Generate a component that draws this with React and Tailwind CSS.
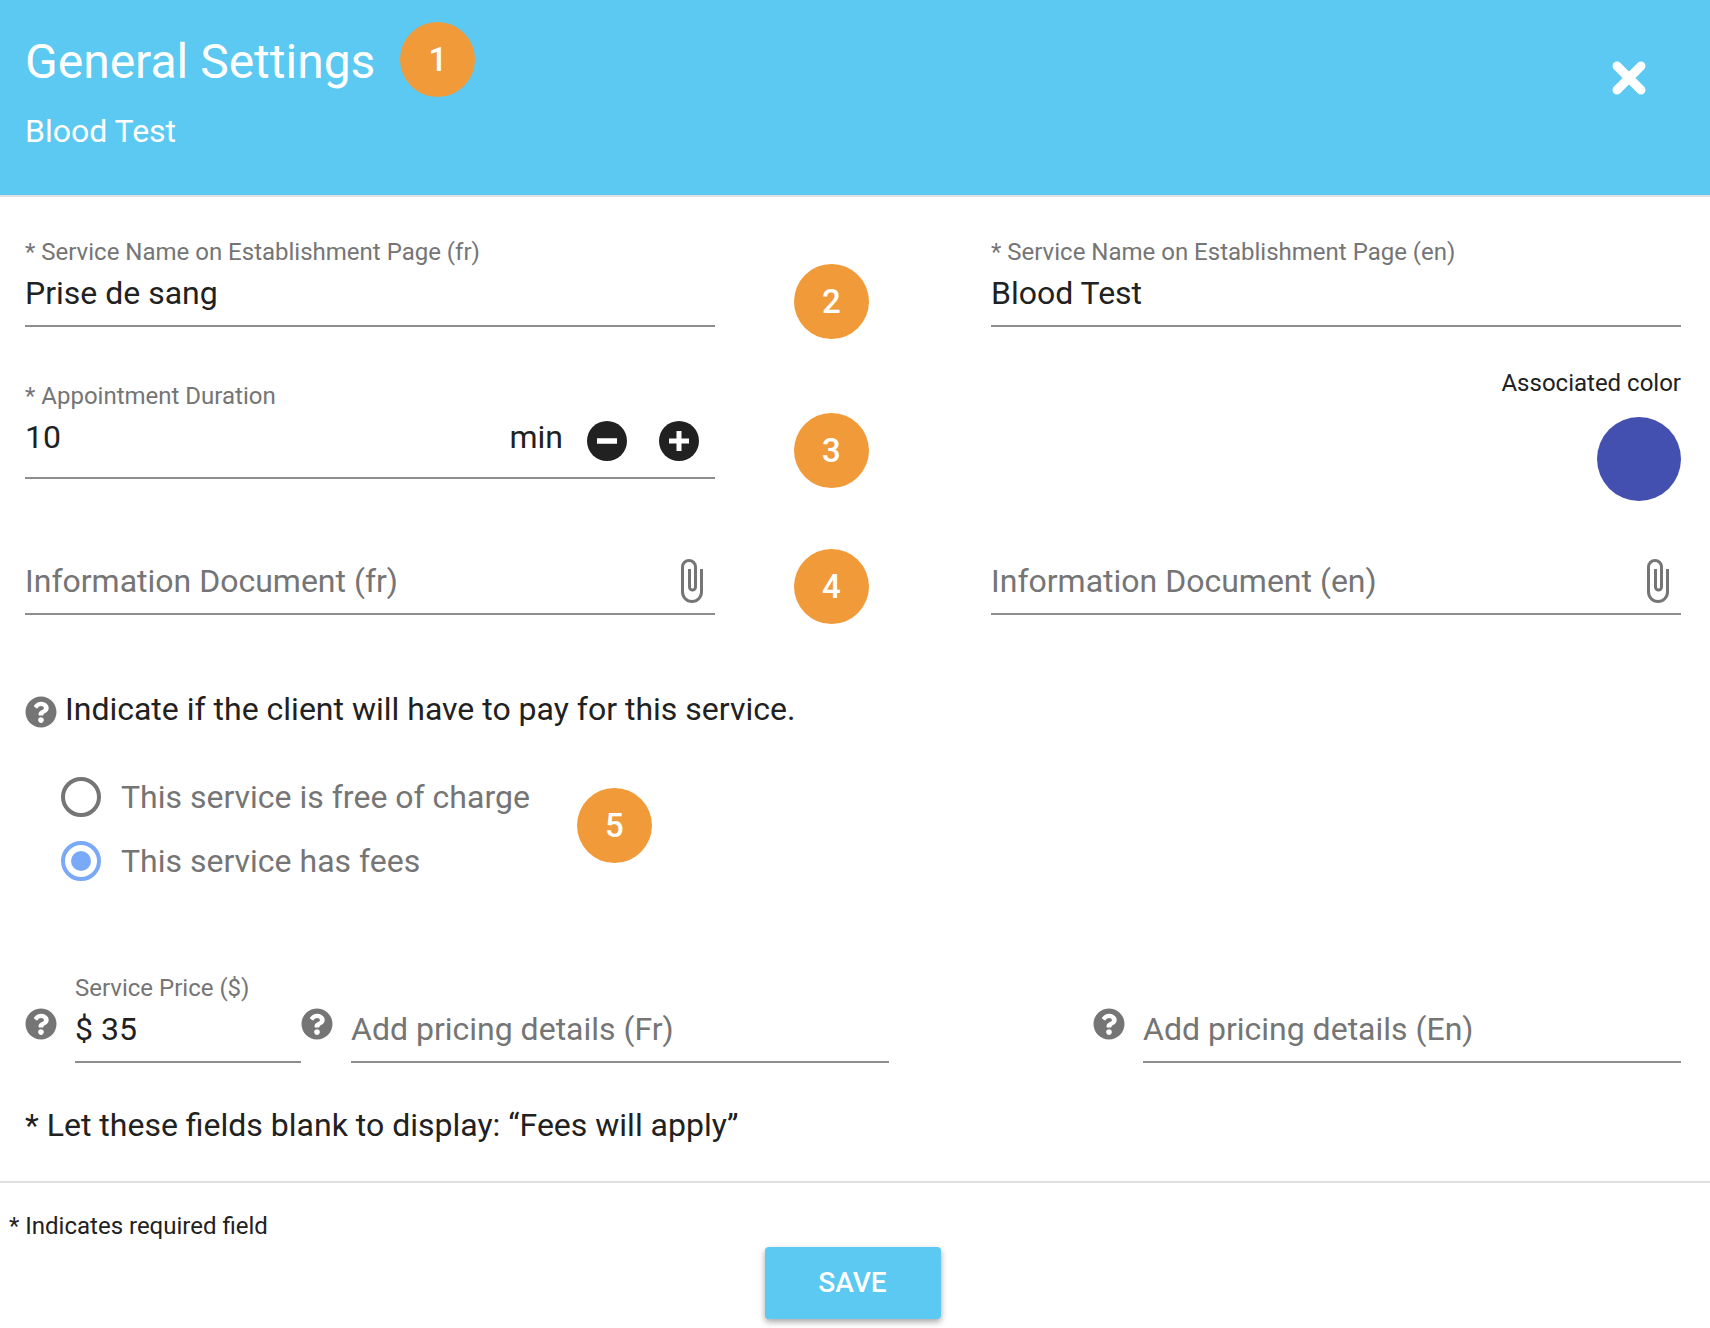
import React from 'react';
import { FaQuestionCircle } from 'react-icons/fa';

const Badge = ({ n, className = '' }) => (
  <div className={`flex h-[75px] w-[75px] shrink-0 items-center justify-center rounded-full bg-[#f19a3a] text-[33px] font-medium text-white ${className}`}>
    {n}
  </div>
);

const Field = ({ label, value, placeholder, height = 'h-[89px]', pb = 'pb-[12px]', children, className = '' }) => (
  <div className={`relative flex flex-col justify-end border-b-2 border-[#8e8e8e] ${height} ${className}`}>
    {label && <div className="absolute left-0 top-0 text-[24px] leading-[28px] text-[#757575]">{label}</div>}
    <div className={`flex items-center justify-between ${pb}`}>
      <div className={`text-[32px] leading-[40px] ${value ? 'text-[#212121]' : 'text-[#757575]'}`}>{value || placeholder}</div>
      {children}
    </div>
  </div>
);

const Help = ({ className = '' }) => (
  <FaQuestionCircle className={`shrink-0 text-[32px] text-[#757575] ${className}`} />
);

const Clip = () => (
  <svg className="mr-[12px] h-[44px] w-[22px]" viewBox="0 0 22 44" fill="none" stroke="#757575" strokeWidth="3">
    <path d="M20.5 10 V33 a9.5 9.5 0 0 1 -19 0 V8 a6.5 6.5 0 0 1 13 0 V28 a3 3 0 0 1 -6 0 V10" />
  </svg>
);

const Stepper = ({ plus, className = '' }) => (
  <svg className={`h-[40px] w-[40px] ${className}`} viewBox="0 0 40 40">
    <circle cx="20" cy="20" r="20" fill="#212121" />
    {plus ? (
      <>
        <rect x="10" y="17.5" width="20" height="5" fill="#fff" />
        <rect x="17.5" y="10" width="5" height="20" fill="#fff" />
      </>
    ) : (
      <rect x="10" y="17.25" width="20" height="5.5" fill="#fff" />
    )}
  </svg>
);

export default function App() {
  return (
    <div className="min-h-[1328px] w-[1710px] bg-white font-['Roboto',sans-serif]">
      {/* Header */}
      <div className="relative h-[197px] border-b-2 border-[#e0e0e0] bg-[#5bc9f1] pl-[25px] text-white">
        <div className="flex items-center pt-[22px]">
          <div className="pt-[4px] text-[48px] leading-[71px]">General Settings</div>
          <Badge n="1" className="ml-[25px]" />
        </div>
        <div className="mt-[14px] text-[32px] leading-[40px]">Blood Test</div>
        <svg className="absolute right-[63px] top-[60px] h-[36px] w-[36px]" viewBox="0 0 36 36">
          <path d="M6 6 L30 30 M30 6 L6 30" stroke="#fff" strokeWidth="9" strokeLinecap="round" />
        </svg>
      </div>

      <div className="px-[25px] pt-[41px]">
        {/* Service names */}
        <div className="flex items-start">
          <Field label="* Service Name on Establishment Page (fr)" value="Prise de sang" className="w-[690px]" />
          <Badge n="2" className="ml-[79px] mt-[26px]" />
          <Field label="* Service Name on Establishment Page (en)" value="Blood Test" className="ml-[122px] w-[690px]" />
        </div>

        {/* Duration */}
        <div className="mt-[43px] flex items-start">
          <Field label="* Appointment Duration" value="10" height="h-[97px]" pb="pb-[15px]" className="w-[690px]">
            <div className="flex items-center text-[32px] leading-[50px] text-[#212121]">
              <span className="mr-[24px]">min</span>
              <Stepper className="mr-[32px] mt-[8px]" />
              <Stepper plus className="mr-[16px] mt-[8px]" />
            </div>
          </Field>
          <Badge n="3" className="ml-[79px] mt-[31px]" />
          <div className="ml-[122px] flex w-[690px] flex-col items-end">
            <div className="-mt-[13px] text-[24px] leading-[28px] text-[#212121]">Associated color</div>
            <div className="mt-[20px] h-[84px] w-[84px] rounded-full bg-[#4350af]" />
          </div>
        </div>

        {/* Documents */}
        <div className="mt-[47px] flex items-start">
          <Field placeholder="Information Document (fr)" height="h-[67px]" pb="pb-[10px]" className="w-[690px]">
            <Clip />
          </Field>
          <Badge n="4" className="ml-[79px] mt-[1px]" />
          <Field placeholder="Information Document (en)" height="h-[67px]" pb="pb-[10px]" className="ml-[122px] w-[690px]">
            <Clip />
          </Field>
        </div>

        {/* Fees */}
        <div className="mt-[65px] flex items-center">
          <Help className="mt-[6px]" />
          <div className="ml-[8px] text-[32px] leading-[40px] text-[#212121]">Indicate if the client will have to pay for this service.</div>
        </div>

        <div className="mt-[48px] flex items-center pl-[36px]">
          <div className="flex flex-col gap-[24px]">
            <div className="flex items-center">
              <div className="h-[40px] w-[40px] rounded-full border-[4px] border-[#757575]" />
              <div className="ml-[20px] text-[32px] leading-[40px] text-[#757575]">This service is free of charge</div>
            </div>
            <div className="flex items-center">
              <div className="flex h-[40px] w-[40px] items-center justify-center rounded-full border-[4px] border-[#7aa9f7]">
                <div className="h-[20px] w-[20px] rounded-full bg-[#7aa9f7]" />
              </div>
              <div className="ml-[20px] text-[32px] leading-[40px] text-[#757575]">This service has fees</div>
            </div>
          </div>
          <Badge n="5" className="mb-[7px] ml-[47px]" />
        </div>

        {/* Pricing */}
        <div className="mt-[93px] flex items-start">
          <Help className="mt-[34px]" />
          <Field label="Service Price ($)" value="$ 35" className="ml-[18px] w-[226px]" />
          <Help className="mt-[34px]" />
          <Field placeholder="Add pricing details (Fr)" className="ml-[18px] w-[538px]" />
          <Help className="ml-[204px] mt-[34px]" />
          <Field placeholder="Add pricing details (En)" className="ml-[18px] w-[538px]" />
        </div>

        <div className="mt-[42px] text-[32px] leading-[40px] text-[#212121]">* Let these fields blank to display: “Fees will apply”</div>
      </div>

      {/* Footer */}
      <div className="mt-[36px] border-t-2 border-[#e0e0e0] pl-[9px] pt-[29px]">
        <div className="text-[24px] leading-[28px] text-[#212121]">* Indicates required field</div>
        <div className="flex justify-center pr-[14px]">
          <button className="mt-[7px] h-[72px] w-[176px] rounded-[4px] bg-[#5bc9f1] text-[28px] font-medium text-white shadow-[0_3px_6px_rgba(0,0,0,0.35)]">
            SAVE
          </button>
        </div>
      </div>
    </div>
  );
}
